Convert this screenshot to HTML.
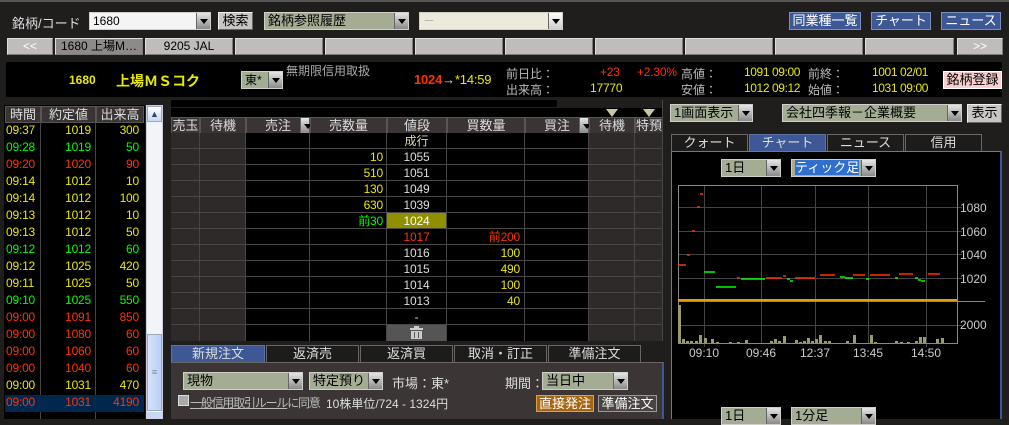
<!DOCTYPE html>
<html><head><meta charset="utf-8"><style>
*{margin:0;padding:0;box-sizing:border-box}
body{width:1009px;height:419px;background:#201d1d;font-family:"Liberation Sans","Noto Sans CJK JP",sans-serif;font-size:12px;color:#ddd;position:relative;overflow:hidden}
.a{position:absolute;white-space:nowrap}
.sel{position:absolute;background:#a4ac94;color:#000;border:1px solid #d0d0c8;height:18px;line-height:16px;padding-left:3px;font-size:12px}
.dd{position:absolute;right:0;top:0;width:14px;height:16px;background:linear-gradient(#e6e6e6,#8a8a8a);border-left:1px solid #666}
.dd:after{content:"";position:absolute;left:3px;top:6px;border-left:4px solid transparent;border-right:4px solid transparent;border-top:5px solid #000}
.tb{position:absolute;top:38px;height:17px;background:#bfbcbb;border:1px solid #e0dedd;border-right-color:#7f7b7b;border-bottom-color:#7f7b7b;color:#000;text-align:center;line-height:15px;font-size:12px}
.bb{position:absolute;background:#3d5894;color:#fff;border:1px solid #7a8fc0;text-align:center;line-height:15px;height:18px;font-size:13px}
.y{color:#e8e800}.g{color:#00ff00}.r{color:#ff3300}
.num{font-family:"Liberation Sans",sans-serif;font-size:12px;letter-spacing:-0.2px}
.nn{letter-spacing:-0.4px}
.hd{position:absolute;background:#3a3434;color:#ddd;border:1px solid #5a5555;text-align:center;line-height:15px;height:17px;font-size:13px}
.tab{position:absolute;height:17px;border:1px solid #6a6666;border-bottom:none;background:#1e1b1b;color:#ddd;text-align:center;line-height:16px;font-size:13px}
</style></head><body>
<div class="a" style="left:0;top:0;width:1009px;height:2px;background:#555"></div>
<div class="a" style="left:12px;top:13px;color:#ddd;font-size:13px">銘柄/コード</div>
<div class="sel" style="left:89px;top:12px;width:122px;background:#f4f4f4">1680<div class="dd"></div></div>
<div class="a" style="left:218px;top:12px;width:35px;height:18px;background:#c8c5c4;border:1px solid #eee;border-right-color:#666;border-bottom-color:#666;color:#000;text-align:center;line-height:15px;font-size:13px">検索</div>
<div class="sel" style="left:264px;top:12px;width:145px;font-size:13px">銘柄参照履歴<div class="dd"></div></div>
<div class="sel" style="left:419px;top:12px;width:144px;background:#edeadb;color:#aaa">－<div class="dd" style="background:linear-gradient(#fff,#ccc)"></div></div>
<div class="bb" style="left:789px;top:12px;width:72px">同業種一覧</div>
<div class="bb" style="left:871px;top:12px;width:60px">チャート</div>
<div class="bb" style="left:941px;top:12px;width:60px">ニュース</div>
<div class="tb" style="left:7px;width:46px;color:#fff">&lt;&lt;</div>
<div class="tb" style="left:55px;width:88px;background:#8f8a8a">1680 上場M…</div>
<div class="tb" style="left:145px;width:88px">9205 JAL</div>
<div class="tb" style="left:235px;width:88px"></div>
<div class="tb" style="left:325px;width:88px"></div>
<div class="tb" style="left:415px;width:88px"></div>
<div class="tb" style="left:505px;width:88px"></div>
<div class="tb" style="left:595px;width:88px"></div>
<div class="tb" style="left:685px;width:88px"></div>
<div class="tb" style="left:775px;width:88px"></div>
<div class="tb" style="left:865px;width:89px"></div>
<div class="tb" style="left:957px;width:46px;color:#fff">&gt;&gt;</div>
<div class="a" style="left:6px;top:62px;width:996px;height:35px;background:#000"></div>
<div class="a y" style="left:69px;top:73px;font-weight:bold;font-size:12px">1680</div>
<div class="a y" style="left:116px;top:71px;font-weight:bold;font-size:14px">上場ＭＳコク</div>
<div class="sel" style="left:241px;top:71px;width:42px">東*<div class="dd"></div></div>
<div class="a" style="left:286px;top:62px;color:#aaa;font-size:12px">無期限信用取扱</div>
<div class="a num" style="left:414px;top:72px;font-size:13px"><b class="r">1024</b><span style="color:#ddd">→</span><span class="y">*14:59</span></div>
<div class="a" style="left:506px;top:65px;color:#bbb">前日比：</div>
<div class="a" style="left:506px;top:81px;color:#bbb">出来高：</div>
<div class="a num r" style="left:600px;top:65px">+23</div>
<div class="a num r" style="left:637px;top:65px">+2.30%</div>
<div class="a num y" style="left:590px;top:81px">17770</div>
<div class="a" style="left:681px;top:65px;color:#bbb">高値：</div>
<div class="a" style="left:681px;top:81px;color:#bbb">安値：</div>
<div class="a num nn y" style="left:744px;top:65px">1091 09:00</div>
<div class="a num nn y" style="left:744px;top:81px">1012 09:12</div>
<div class="a" style="left:808px;top:65px;color:#bbb">前終：</div>
<div class="a" style="left:808px;top:81px;color:#bbb">始値：</div>
<div class="a num nn y" style="left:872px;top:65px">1001 02/01</div>
<div class="a num nn y" style="left:872px;top:81px">1031 09:00</div>
<div class="a" style="left:943px;top:71px;width:59px;height:18px;background:#f7cfd0;border:1px solid #fff;color:#000;text-align:center;line-height:16px;font-size:13px">銘柄登録</div>

<div class="a" style="left:4px;top:105px;width:141px;height:314px;background:#000"></div>
<div class="hd" style="left:5px;top:106px;width:36px">時間</div>
<div class="hd" style="left:41px;top:106px;width:55px">約定値</div>
<div class="hd" style="left:96px;top:106px;width:48px">出来高</div>
<div class="a" style="left:40px;top:122px;width:1px;height:297px;background:#444"></div>
<div class="a" style="left:95px;top:122px;width:1px;height:297px;background:#444"></div>
<div class="a" style="left:5px;top:395px;width:139px;height:17px;background:#00284f"></div>
<div class="a num" style="left:6px;top:122px;line-height:17px">
<div class="y">09:37</div><div class="g">09:28</div><div class="r">09:20</div><div class="y">09:14</div><div class="y">09:14</div><div class="y">09:13</div><div class="y">09:13</div><div class="g">09:12</div><div class="y">09:12</div><div class="y">09:11</div><div class="g">09:10</div><div class="r">09:00</div><div class="r">09:00</div><div class="r">09:00</div><div class="r">09:00</div><div class="y">09:00</div><div class="r">09:00</div></div>
<div class="a num" style="left:58px;top:122px;line-height:17px;width:33px;text-align:right">
<div class="y">1019</div><div class="g">1019</div><div class="r">1020</div><div class="y">1012</div><div class="y">1012</div><div class="y">1012</div><div class="y">1012</div><div class="g">1012</div><div class="y">1025</div><div class="y">1025</div><div class="g">1025</div><div class="r">1091</div><div class="r">1080</div><div class="r">1060</div><div class="r">1040</div><div class="y">1031</div><div class="r">1031</div></div>
<div class="a num" style="left:100px;top:122px;line-height:17px;width:39px;text-align:right">
<div class="y">300</div><div class="g">50</div><div class="r">90</div><div class="y">10</div><div class="y">100</div><div class="y">10</div><div class="y">50</div><div class="g">60</div><div class="y">420</div><div class="y">50</div><div class="g">550</div><div class="r">850</div><div class="r">60</div><div class="r">60</div><div class="r">60</div><div class="y">470</div><div class="r">4190</div></div>
<div class="a" style="left:146px;top:105px;width:17px;height:314px;background:#f2f4f8;border:1px solid #ccd"></div>
<div class="a" style="left:147px;top:106px;width:15px;height:16px;background:linear-gradient(#fff,#c8d8f4);border:1px solid #9ab;color:#346;text-align:center;font-size:9px;line-height:14px">▲</div>
<div class="a" style="left:147px;top:334px;width:15px;height:77px;background:linear-gradient(90deg,#d6e3fa,#b9cff5);border:1px solid #9ab;color:#789;text-align:center;line-height:75px;font-size:9px">≡</div>
<div class="a" style="left:147px;top:412px;width:15px;height:7px;background:#c8d8f4"></div>

<div class="a" style="left:171px;top:100px;width:386px;height:7px;background:#000"></div>
<div class="a" style="left:171px;top:108px;width:492px;height:9px;background:#000"></div>
<div class="a" style="left:606px;top:109px;border-left:6px solid transparent;border-right:6px solid transparent;border-top:8px solid #c8c89a"></div>
<div class="a" style="left:643px;top:109px;border-left:6px solid transparent;border-right:6px solid transparent;border-top:8px solid #c8c89a"></div>
<div class="hd" style="left:171px;top:117px;width:29px">売玉</div>
<div class="hd" style="left:200px;top:117px;width:46px">待機</div>
<div class="hd" style="left:246px;top:117px;width:64px">売注<div class="dd" style="width:9px;height:15px;right:0"></div></div>
<div class="hd" style="left:310px;top:117px;width:77px">売数量</div>
<div class="hd" style="left:387px;top:117px;width:60px">値段</div>
<div class="hd" style="left:447px;top:117px;width:78px">買数量</div>
<div class="hd" style="left:525px;top:117px;width:64px">買注<div class="dd" style="width:9px;height:15px;right:0"></div></div>
<div class="hd" style="left:589px;top:117px;width:46px">待機</div>
<div class="hd" style="left:635px;top:117px;width:28px">特預</div>
<div class="a" style="left:171px;top:133px;width:75px;height:208px;background:#2e2a2a"></div>
<div class="a" style="left:246px;top:133px;width:343px;height:208px;background:#000"></div>
<div class="a" style="left:589px;top:133px;width:74px;height:208px;background:#2e2a2a"></div>
<svg class="a" style="left:0;top:0" width="1009" height="419">
<g stroke="#4a4646" stroke-width="1">
<line x1="171" y1="148.5" x2="663" y2="148.5"/><line x1="171" y1="164.5" x2="663" y2="164.5"/><line x1="171" y1="180.5" x2="663" y2="180.5"/><line x1="171" y1="196.5" x2="663" y2="196.5"/><line x1="171" y1="212.5" x2="663" y2="212.5"/><line x1="171" y1="228.5" x2="663" y2="228.5"/><line x1="171" y1="244.5" x2="663" y2="244.5"/><line x1="171" y1="260.5" x2="663" y2="260.5"/><line x1="171" y1="276.5" x2="663" y2="276.5"/><line x1="171" y1="292.5" x2="663" y2="292.5"/><line x1="171" y1="308.5" x2="663" y2="308.5"/><line x1="171" y1="324.5" x2="663" y2="324.5"/>
<line x1="199.5" y1="133" x2="199.5" y2="341"/><line x1="245.5" y1="133" x2="245.5" y2="341"/><line x1="309.5" y1="133" x2="309.5" y2="341"/><line x1="386.5" y1="133" x2="386.5" y2="341"/><line x1="446.5" y1="133" x2="446.5" y2="341"/><line x1="524.5" y1="133" x2="524.5" y2="341"/><line x1="588.5" y1="133" x2="588.5" y2="341"/><line x1="634.5" y1="133" x2="634.5" y2="341"/><line x1="662.5" y1="100" x2="662.5" y2="341"/>
</g>
<rect x="387" y="213" width="59" height="15" fill="#8f8f00"/>
<rect x="387" y="325" width="59" height="16" fill="#555"/>
<g fill="#ccc"><rect x="410" y="328" width="13" height="2"/><rect x="414" y="326" width="5" height="2"/><rect x="411" y="331" width="11" height="8"/></g>
<g stroke="#555" stroke-width="1"><line x1="414.5" y1="332" x2="414.5" y2="338"/><line x1="418.5" y1="332" x2="418.5" y2="338"/></g>
</svg>
<div class="a num" style="left:387px;top:133px;width:59px;text-align:center;line-height:16px;color:#ddd">
<div style="color:#dcd8b0;font-family:'Liberation Sans','Noto Sans CJK JP',sans-serif;font-size:12px;letter-spacing:0">成行</div><div>1055</div><div>1051</div><div>1049</div><div>1039</div><div style="color:#fff">1024</div><div class="r">1017</div><div>1016</div><div>1015</div><div>1014</div><div>1013</div><div>-</div></div>
<div class="a num" style="left:320px;top:149px;width:63px;text-align:right;line-height:16px">
<div class="y">10</div><div class="y">510</div><div class="y">130</div><div class="y">630</div><div class="g">前30</div></div>
<div class="a num" style="left:460px;top:229px;width:60px;text-align:right;line-height:16px">
<div class="r">前200</div><div class="y">100</div><div class="y">490</div><div class="y">100</div><div class="y">40</div></div>

<div class="tab" style="left:171px;top:345px;width:94px;background:#3d5894;border-color:#5a72a8">新規注文</div>
<div class="tab" style="left:266px;top:345px;width:93px">返済売</div>
<div class="tab" style="left:360px;top:345px;width:93px">返済買</div>
<div class="tab" style="left:454px;top:345px;width:93px">取消・訂正</div>
<div class="tab" style="left:548px;top:345px;width:93px">準備注文</div>
<div class="a" style="left:171px;top:362px;width:493px;height:57px;background:#3c3535;border-top:1px solid #6a6666;border-right:2px solid #3d5894"></div>
<div class="sel" style="left:183px;top:372px;width:120px;font-size:13px">現物<div class="dd"></div></div>
<div class="sel" style="left:309px;top:372px;width:74px;font-size:13px">特定預り<div class="dd"></div></div>
<div class="a" style="left:392px;top:373px;font-size:13px;color:#ddd">市場：東*</div>
<div class="a" style="left:505px;top:373px;font-size:13px;color:#ddd">期間：</div>
<div class="sel" style="left:542px;top:372px;width:86px;font-size:13px">当日中<div class="dd"></div></div>
<div class="a" style="left:178px;top:395px;width:11px;height:11px;background:#aaa;border:1px solid #ddd"></div>
<div class="a" style="left:190px;top:394px;font-size:12px;letter-spacing:-1.2px;color:#bbb"><span style="text-decoration:underline">一般信用取引ルール</span>に同意</div>
<div class="a" style="left:326px;top:395px;font-size:12px;color:#ddd">10株単位/724 - 1324円</div>
<div class="a" style="left:536px;top:395px;width:58px;height:17px;background:#a8650f;border:1px solid #e0a040;color:#fff;text-align:center;line-height:15px;font-size:13px">直接発注</div>
<div class="a" style="left:598px;top:395px;width:59px;height:17px;background:#4a4444;border:1px solid #999;color:#fff;text-align:center;line-height:15px;font-size:13px">準備注文</div>

<div class="sel" style="left:670px;top:104px;width:83px;font-size:13px">1画面表示<div class="dd"></div></div>
<div class="sel" style="left:782px;top:104px;width:180px;font-size:13px">会社四季報－企業概要<div class="dd"></div></div>
<div class="a" style="left:967px;top:104px;width:35px;height:19px;background:#c8c5c4;border:1px solid #eee;border-right-color:#666;border-bottom-color:#666;color:#000;text-align:center;line-height:16px;font-size:13px">表示</div>
<div class="tab" style="left:671px;top:134px;width:77px">クォート</div>
<div class="tab" style="left:749px;top:134px;width:77px;background:#3d5894;border-color:#5a72a8">チャート</div>
<div class="tab" style="left:827px;top:134px;width:77px">ニュース</div>
<div class="tab" style="left:905px;top:134px;width:77px">信用</div>
<div class="a" style="left:671px;top:151px;width:331px;height:268px;background:#000;border-top:1px solid #777;border-left:1px solid #777;border-right:2px solid #3d5894"></div>
<div class="sel" style="left:721px;top:159px;width:60px;font-size:13px">1日<div class="dd"></div></div>
<div class="sel" style="left:791px;top:159px;width:85px;font-size:13px"><span style="background:#2f6fd0;color:#fff">ティック足</span><div class="dd"></div></div>
<div class="sel" style="left:721px;top:407px;width:60px;font-size:13px">1日<div class="dd"></div></div>
<div class="sel" style="left:791px;top:407px;width:85px;font-size:13px">1分足<div class="dd"></div></div>
<svg class="a" style="left:0;top:0" width="1009" height="419">
<g stroke="#444" stroke-width="1">
<line x1="678" y1="207.5" x2="962" y2="207.5"/><line x1="678" y1="231.5" x2="962" y2="231.5"/><line x1="678" y1="254.5" x2="962" y2="254.5"/><line x1="678" y1="278.5" x2="962" y2="278.5"/><line x1="678" y1="325.5" x2="962" y2="325.5"/>
<line x1="704.5" y1="185" x2="704.5" y2="347"/><line x1="761.5" y1="185" x2="761.5" y2="343"/><line x1="815.5" y1="185" x2="815.5" y2="343"/><line x1="868.5" y1="185" x2="868.5" y2="343"/><line x1="926.5" y1="185" x2="926.5" y2="347"/>
</g>
<rect x="678.5" y="185.5" width="279" height="158" fill="none" stroke="#888"/>
<line x1="678" y1="301.5" x2="985" y2="301.5" stroke="#888"/>
<line x1="678" y1="300" x2="957" y2="300" stroke="#e0a000" stroke-width="2"/>
<g stroke-width="1.5">
<path stroke="#ff3300" d="M678 265h8M687 255h3M692 231h3M697 207h3M700 194h3M737 278h3M766 278h16M783 276h3M795 278h20M820 275h15M853 275h12M870 275h20M899 274h14M928 274h12"/>
<path stroke="#00ff00" d="M704 272h11M716 287h20M741 279h24M787 279h3M790 281h3M840 277h5M845 278h8M866 279h3M895 278h3M915 278h3M918 280h3M921 281h4"/>
</g>
<g fill="#9a9a6a">
<rect x="678" y="305" width="3" height="38"/><rect x="682" y="339" width="3" height="4"/><rect x="686" y="341" width="3" height="2"/><rect x="690" y="341" width="3" height="2"/><rect x="695" y="341" width="3" height="2"/><rect x="699" y="335" width="3" height="8"/><rect x="704" y="338" width="3" height="5"/><rect x="711" y="339" width="3" height="4"/><rect x="716" y="342" width="3" height="1"/><rect x="729" y="342" width="3" height="1"/><rect x="737" y="342" width="3" height="1"/><rect x="745" y="340" width="3" height="3"/><rect x="770" y="341" width="3" height="2"/><rect x="774" y="339" width="3" height="4"/><rect x="778" y="341" width="3" height="2"/><rect x="783" y="336" width="3" height="7"/><rect x="795" y="340" width="3" height="3"/><rect x="799" y="342" width="3" height="1"/><rect x="803" y="341" width="3" height="2"/><rect x="807" y="338" width="3" height="5"/><rect x="811" y="341" width="3" height="2"/><rect x="815" y="339" width="3" height="4"/><rect x="819" y="335" width="3" height="8"/><rect x="824" y="341" width="3" height="2"/><rect x="828" y="341" width="3" height="2"/><rect x="846" y="341" width="3" height="2"/><rect x="853" y="335" width="3" height="8"/><rect x="870" y="335" width="3" height="8"/><rect x="874" y="342" width="3" height="1"/><rect x="895" y="341" width="3" height="2"/><rect x="900" y="342" width="3" height="1"/><rect x="907" y="342" width="3" height="1"/><rect x="915" y="341" width="3" height="2"/><rect x="919" y="337" width="3" height="6"/><rect x="923" y="337" width="3" height="6"/><rect x="936" y="339" width="3" height="4"/><rect x="941" y="338" width="3" height="5"/>
</g>
<g fill="#ccc" font-family="Liberation Sans, sans-serif" font-size="12">
<text x="960" y="212">1080</text><text x="960" y="236">1060</text><text x="960" y="259">1040</text><text x="960" y="283">1020</text><text x="960" y="329">2000</text>
<text x="704" y="357" text-anchor="middle">09:10</text><text x="761" y="357" text-anchor="middle">09:46</text><text x="815" y="357" text-anchor="middle">12:37</text><text x="868" y="357" text-anchor="middle">13:45</text><text x="926" y="357" text-anchor="middle">14:50</text>
</g>
</svg>
</body></html>
